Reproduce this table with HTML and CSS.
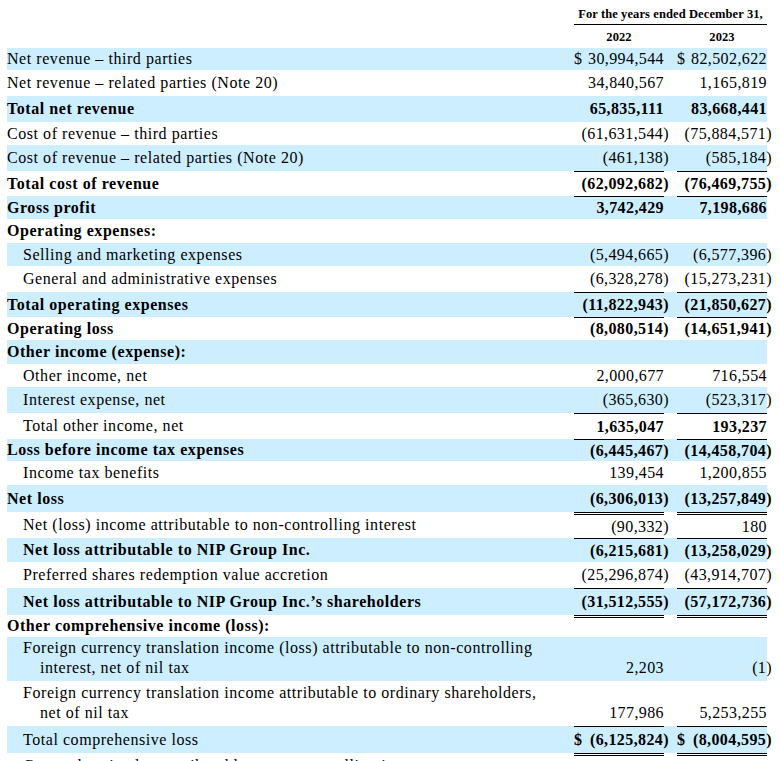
FILE: index.html
```html
<!DOCTYPE html>
<html>
<head>
<meta charset="utf-8">
<link rel="stylesheet" href="styles.css">
</head>
<body>
<table class="fin">
  <colgroup>
    <col class="c-label"><col class="c-val"><col class="c-gap"><col class="c-val">
  </colgroup>
  <thead>
    <tr class="hd1"><th></th><th colspan="3" class="period">For the years ended December 31,</th></tr>
    <tr class="hd2"><th></th><th class="yr">2022</th><th></th><th class="yr">2023</th></tr>
  </thead>
  <tbody>
    <tr class="b h22"><td class="lb">Net revenue – third parties</td><td class="v"><span class="cur">$</span>30,994,544</td><td></td><td class="v"><span class="cur">$</span>82,502,622</td></tr>
    <tr class="h26"><td class="lb">Net revenue – related parties (Note 20)</td><td class="v">34,840,567</td><td></td><td class="v">1,165,819</td></tr>
    <tr class="b h26 bold"><td class="lb">Total net revenue</td><td class="v">65,835,111</td><td></td><td class="v">83,668,441</td></tr>
    <tr class="h23"><td class="lb">Cost of revenue – third parties</td><td class="v">(61,631,544<span class="p">)</span></td><td></td><td class="v">(75,884,571<span class="p">)</span></td></tr>
    <tr class="b h26"><td class="lb">Cost of revenue – related parties (Note 20)</td><td class="v">(461,138<span class="p">)</span></td><td></td><td class="v">(585,184<span class="p">)</span></td></tr>
    <tr class="h25 bold"><td class="lb">Total cost of revenue</td><td class="v t">(62,092,682<span class="p">)</span></td><td></td><td class="v t">(76,469,755<span class="p">)</span></td></tr>
    <tr class="b h23 bold"><td class="lb">Gross profit</td><td class="v t">3,742,429</td><td></td><td class="v t">7,198,686</td></tr>
    <tr class="h24 bold"><td class="lb">Operating expenses:</td><td></td><td></td><td></td></tr>
    <tr class="b h23"><td class="lb in">Selling and marketing expenses</td><td class="v">(5,494,665<span class="p">)</span></td><td></td><td class="v">(6,577,396<span class="p">)</span></td></tr>
    <tr class="h26"><td class="lb in">General and administrative expenses</td><td class="v">(6,328,278<span class="p">)</span></td><td></td><td class="v">(15,273,231<span class="p">)</span></td></tr>
    <tr class="b h25 bold"><td class="lb">Total operating expenses</td><td class="v t">(11,822,943<span class="p">)</span></td><td></td><td class="v t">(21,850,627<span class="p">)</span></td></tr>
    <tr class="h23 bold"><td class="lb">Operating loss</td><td class="v t">(8,080,514<span class="p">)</span></td><td></td><td class="v t">(14,651,941<span class="p">)</span></td></tr>
    <tr class="b h24 bold"><td class="lb">Other income (expense):</td><td></td><td></td><td></td></tr>
    <tr class="h23"><td class="lb in">Other income, net</td><td class="v">2,000,677</td><td></td><td class="v">716,554</td></tr>
    <tr class="b h26"><td class="lb in">Interest expense, net</td><td class="v">(365,630<span class="p">)</span></td><td></td><td class="v">(523,317<span class="p">)</span></td></tr>
    <tr class="h26"><td class="lb in">Total other income, net</td><td class="v t bv">1,635,047</td><td></td><td class="v t bv">193,237</td></tr>
    <tr class="b h22 bold"><td class="lb">Loss before income tax expenses</td><td class="v t">(6,445,467<span class="p">)</span></td><td></td><td class="v t">(14,458,704<span class="p">)</span></td></tr>
    <tr class="h24"><td class="lb in">Income tax benefits</td><td class="v">139,454</td><td></td><td class="v">1,200,855</td></tr>
    <tr class="b h27 bold"><td class="lb">Net loss</td><td class="v">(6,306,013<span class="p">)</span></td><td></td><td class="v">(13,257,849<span class="p">)</span></td></tr>
    <tr class="h26"><td class="lb in">Net (loss) income attributable to non-controlling interest</td><td class="v dt">(90,332<span class="p">)</span></td><td></td><td class="v dt">180</td></tr>
    <tr class="b h24 bold"><td class="lb in">Net loss attributable to NIP Group Inc.</td><td class="v t">(6,215,681<span class="p">)</span></td><td></td><td class="v t">(13,258,029<span class="p">)</span></td></tr>
    <tr class="h26"><td class="lb in">Preferred shares redemption value accretion</td><td class="v">(25,296,874<span class="p">)</span></td><td></td><td class="v">(43,914,707<span class="p">)</span></td></tr>
    <tr class="b h27 bold"><td class="lb in">Net loss attributable to NIP Group Inc.’s shareholders</td><td class="v t">(31,512,555<span class="p">)</span></td><td></td><td class="v t">(57,172,736<span class="p">)</span></td></tr>
    <tr class="h22 bold"><td class="lb">Other comprehensive income (loss):</td><td class="dt"></td><td></td><td class="dt"></td></tr>
    <tr class="b h44 wrap"><td class="lb hang">Foreign currency translation income (loss) attributable to non-controlling<br>interest, net of nil tax</td><td class="v">2,203</td><td></td><td class="v">(1<span class="p">)</span></td></tr>
    <tr class="h45 wrap"><td class="lb hang">Foreign currency translation income attributable to ordinary shareholders,<br>net of nil tax</td><td class="v">177,986</td><td></td><td class="v">5,253,255</td></tr>
    <tr class="b h27"><td class="lb in">Total comprehensive loss</td><td class="v t bv"><span class="cur">$</span>(6,125,824<span class="p">)</span></td><td></td><td class="v t bv"><span class="cur">$</span>(8,004,595<span class="p">)</span></td></tr>
    <tr class="h26"><td class="lb in">Comprehensive loss attributable to non-controlling interest</td><td class="v dt">(88,129<span class="p">)</span></td><td></td><td class="v dt">179</td></tr>
  </tbody>
</table>
</body>
</html>
```

FILE: styles.css
```css
html, body {
  margin: 0;
  padding: 0;
  background: #ffffff;
}

body {
  padding-left: 7px;
  font-family: "Liberation Serif", "Times New Roman", serif;
  color: #000000;
}

.fin {
  border-collapse: separate;
  border-spacing: 0;
  table-layout: fixed;
  width: 760px;
  font-size: 16px;
  letter-spacing: 0.55px;
}

.c-label { width: 567px; }
.c-val { width: 90px; }
.c-gap { width: 13px; }

.fin th,
.fin td {
  padding: 0;
  white-space: nowrap;
}

.fin th {
  font-size: 12.5px;
  font-weight: bold;
  letter-spacing: 0.1px;
  text-align: center;
}

.hd1 { height: 25px; }
.hd1 th { vertical-align: bottom; padding-bottom: 2px; }
.period { border-bottom: 1px solid #000; }
.hd2 { height: 23px; }
.hd2 th { vertical-align: middle; padding-top: 1px; }

.fin td { vertical-align: middle; line-height: 18px; }

.b { background: #cceeff; }
.bold td { font-weight: bold; }
.bv { font-weight: bold; }

.lb { text-align: left; }
.lb.in { padding-left: 16px; }
.lb.hang { padding-left: 33px; text-indent: -17px; }

.v { text-align: right; letter-spacing: 0.4px; }
.v .p { margin-right: -5px; }
.cur { float: left; }

.t { border-top: 1px solid #000; }
.dt { border-top: 3px double #000; }

.wrap td { vertical-align: bottom; padding-bottom: 3px; line-height: 20px; }
.wrap td.lb { white-space: normal; }

.h22 { height: 22px; }
.h23 { height: 23px; }
.h24 { height: 24px; }
.h25 { height: 25px; }
.h26 { height: 26px; }
.h27 { height: 27px; }
.h44 { height: 44px; }
.h45 { height: 45px; }
```
